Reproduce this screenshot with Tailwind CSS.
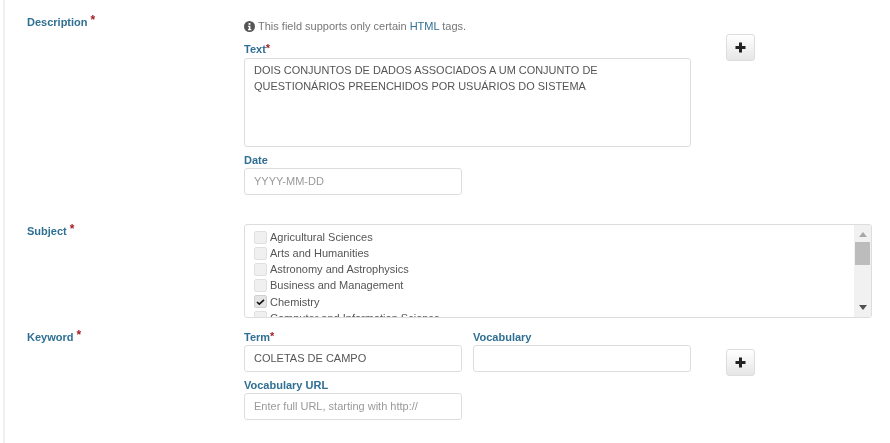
<!DOCTYPE html>
<html>
<head>
<meta charset="utf-8">
<script src="https://cdn.jsdelivr.net/npm/@tailwindcss/browser@4"></script>
</head>
<body class="bg-white overflow-hidden">
<div class="w-[890px] h-[443px] font-['Liberation_Sans',Arial,sans-serif] text-[11px] text-[#555] overflow-hidden blur-[0.4px]">
  <div class="ml-[3px] w-[2px] h-[443px] bg-[#f0f0f0] float-left"></div>
  <div class="ml-[5px] w-[885px] pl-[22px] flex flex-col">
    <!-- Description -->
    <div class="flex h-[224px]">
      <div class="w-[217px] pt-[14px] leading-[16px] font-bold text-[#2f6f94]">Description <span class="text-[#a11f26] text-[12px] leading-[0] align-[2px]">*</span></div>
      <div class="flex flex-col">
        <div class="flex items-center gap-[3px] mt-[18px] h-[16px] text-[#777]">
          <svg class="w-[11px] h-[11px]" viewBox="0 0 12 12"><circle cx="6" cy="6" r="6" fill="#555"/><rect x="5" y="2.2" width="2" height="2" fill="#fff"/><path d="M4.4 5.2H7V8.8H8V10H4.4V8.8H5.2V6.3H4.4Z" fill="#fff"/></svg>
          <span>This field supports only certain <span class="text-[#2f6f94]">HTML</span> tags.</span>
        </div>
        <div class="flex mt-[7px]">
          <div class="w-[448px]">
            <div class="h-[17px] leading-[16px] font-bold text-[#2f6f94]">Text<span class="text-[#a11f26] leading-[0] align-[1px]">*</span></div>
            <div class="h-[89px] border border-[#ddd] rounded-[3px] px-[9px] pt-[4px] leading-[15.5px] w-[447px] text-[10.95px]">DOIS CONJUNTOS DE DADOS ASSOCIADOS A UM CONJUNTO DE<br>QUESTIONÁRIOS PREENCHIDOS POR USUÁRIOS DO SISTEMA</div>
          </div>
          <div class="ml-[34px] -mt-[7px]">
            <button class="w-[29px] h-[27px] flex items-center justify-center border border-[#ddd] rounded-[3px] bg-gradient-to-b from-white to-[#e6e6e6]">
              <svg class="w-[11px] h-[11px]" viewBox="0 0 11 11"><path d="M4 0.5H7V4H10.5V7H7V10.5H4V7H0.5V4H4Z" fill="#222"/></svg>
            </button>
          </div>
        </div>
        <div class="h-[16px] leading-[16px] font-bold text-[#2f6f94] mt-[5px]">Date</div>
        <div class="w-[218px] h-[27px] border border-[#ddd] rounded-[3px] px-[9px] leading-[25px] text-[#999]">YYYY-MM-DD</div>
      </div>
    </div>
    <!-- Subject -->
    <div class="flex h-[106px]">
      <div class="w-[217px] leading-[14px] font-bold text-[#2f6f94]">Subject <span class="text-[#a11f26] text-[12px] leading-[0] align-[2px]">*</span></div>
      <div class="relative w-[628px] h-[94px] border border-[#ddd] rounded-[3px] overflow-hidden">
        <div class="flex flex-col pl-[9px] pt-[4px] leading-[16px]">
          <div class="flex items-center gap-[3px] h-[16px]"><span class="w-[13px] h-[13px] rounded-[2px] bg-[#f0f0f0] border border-[#e0e0e0]"></span>Agricultural Sciences</div>
          <div class="flex items-center gap-[3px] h-[16px]"><span class="w-[13px] h-[13px] rounded-[2px] bg-[#f0f0f0] border border-[#e0e0e0]"></span>Arts and Humanities</div>
          <div class="flex items-center gap-[3px] h-[16px]"><span class="w-[13px] h-[13px] rounded-[2px] bg-[#f0f0f0] border border-[#e0e0e0]"></span>Astronomy and Astrophysics</div>
          <div class="flex items-center gap-[3px] h-[16px]"><span class="w-[13px] h-[13px] rounded-[2px] bg-[#f0f0f0] border border-[#e0e0e0]"></span>Business and Management</div>
          <div class="flex items-center gap-[3px] h-[16px] mt-[0.5px]"><span class="w-[13px] h-[13px] rounded-[2px] bg-[#e4e4e4] border border-[#d0d0d0] flex items-center justify-center"><svg class="w-[9px] h-[9px]" viewBox="0 0 9 9"><path d="M1 5L3.3 7.2L8 2.8" fill="none" stroke="#111" stroke-width="1.6"/></svg></span>Chemistry</div>
          <div class="flex items-center gap-[3px] h-[16px]"><span class="w-[13px] h-[13px] rounded-[2px] bg-[#f0f0f0] border border-[#e0e0e0]"></span>Computer and Information Science</div>
        </div>
        <div class="absolute right-0 top-0 bottom-0 w-[17px] bg-[#f1f1f1] flex flex-col items-center">
          <svg class="w-[8px] h-[5px] mt-[7px]" viewBox="0 0 8 5"><path d="M4 0L8 5H0Z" fill="#a8a8a8"/></svg>
          <div class="w-[15px] h-[23px] mt-[5px] bg-[#bcbcbc]"></div>
          <svg class="w-[8px] h-[5px] mt-auto mb-[7px]" viewBox="0 0 8 5"><path d="M0 0H8L4 5Z" fill="#505050"/></svg>
        </div>
      </div>
    </div>
    <!-- Keyword -->
    <div class="flex">
      <div class="w-[217px] -mt-[1px] leading-[16px] font-bold text-[#2f6f94]">Keyword <span class="text-[#a11f26] text-[12px] leading-[0] align-[2px]">*</span></div>
      <div class="flex flex-col -mt-[1px]">
        <div class="flex">
          <div class="w-[229px]">
            <div class="h-[16px] leading-[16px] font-bold text-[#2f6f94]">Term<span class="text-[#a11f26] leading-[0] align-[1px]">*</span></div>
            <div class="w-[218px] h-[27px] border border-[#ddd] rounded-[3px] px-[9px] leading-[25px]">COLETAS DE CAMPO</div>
          </div>
          <div class="w-[218px]">
            <div class="h-[16px] leading-[16px] font-bold text-[#2f6f94]">Vocabulary</div>
            <div class="w-[218px] h-[27px] border border-[#ddd] rounded-[3px]"></div>
          </div>
          <div class="ml-[35px] mt-[20px]">
            <button class="w-[29px] h-[27px] flex items-center justify-center border border-[#ddd] rounded-[3px] bg-gradient-to-b from-white to-[#e6e6e6]">
              <svg class="w-[11px] h-[11px]" viewBox="0 0 11 11"><path d="M4 0.5H7V4H10.5V7H7V10.5H4V7H0.5V4H4Z" fill="#222"/></svg>
            </button>
          </div>
        </div>
        <div class="h-[16px] leading-[16px] font-bold text-[#2f6f94] mt-[1px]">Vocabulary URL</div>
        <div class="w-[218px] h-[27px] border border-[#ddd] rounded-[3px] px-[9px] leading-[25px] text-[#999]">Enter full URL, starting with http://</div>
      </div>
    </div>
  </div>
</div>
</body>
</html>
